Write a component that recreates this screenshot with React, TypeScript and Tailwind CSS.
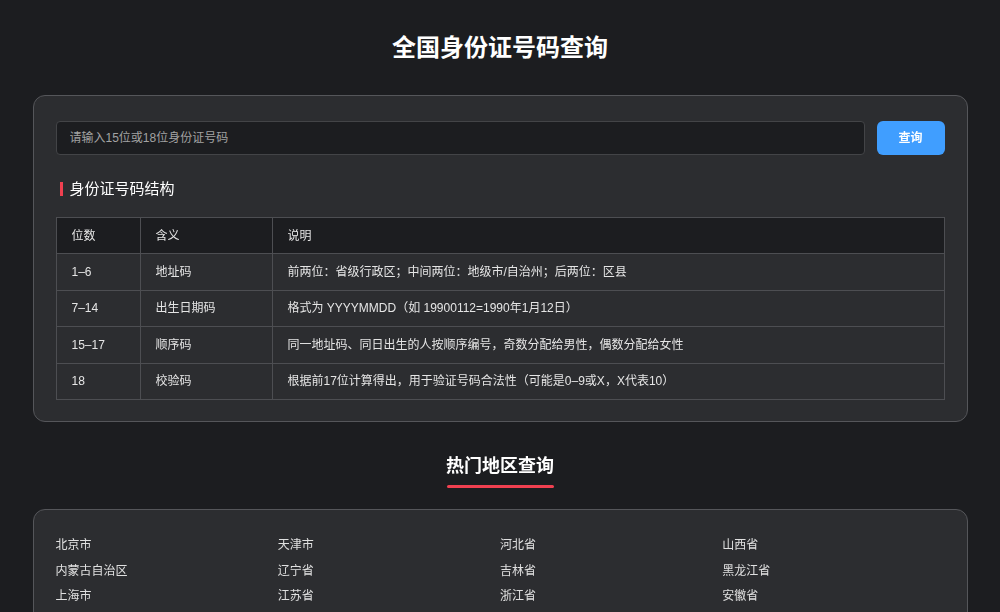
import React, { useState } from "react";

const rows = [
  { digits: "1–6", name: "地址码", desc: "前两位：省级行政区；中间两位：地级市/自治州；后两位：区县" },
  { digits: "7–14", name: "出生日期码", desc: "格式为 YYYYMMDD（如 19900112=1990年1月12日）" },
  { digits: "15–17", name: "顺序码", desc: "同一地址码、同日出生的人按顺序编号，奇数分配给男性，偶数分配给女性" },
  { digits: "18", name: "校验码", desc: "根据前17位计算得出，用于验证号码合法性（可能是0–9或X，X代表10）" },
];

const regions = [
  "北京市", "天津市", "河北省", "山西省",
  "内蒙古自治区", "辽宁省", "吉林省", "黑龙江省",
  "上海市", "江苏省", "浙江省", "安徽省",
];

export default function App() {
  const [idNo, setIdNo] = useState("");

  return (
    <div
      className="min-h-screen bg-[#1c1d20] text-[#e5e5e5] overflow-hidden"
      style={{ fontFamily: '"Liberation Sans", "Noto Sans CJK SC", sans-serif' }}
    >
      <div className="w-[935px] mx-auto pt-[30px]">
        <h1 className="text-center text-[24px] leading-[36px] font-bold text-white">全国身份证号码查询</h1>

        <div className="mt-[29px] rounded-xl border border-[#55565a] bg-[#2c2d30] px-[22px] pt-[25px] pb-[21px]">
          <div className="flex gap-3">
            <input
              autoFocus
              value={idNo}
              onChange={(e) => setIdNo(e.target.value)}
              placeholder="请输入15位或18位身份证号码"
              className="flex-1 h-[34px] rounded border border-[#434447] bg-[#1c1d20] px-[13px] text-[12px] text-white placeholder:text-[#a3a3a3] outline-none caret-white"
            />
            <button className="w-[68px] h-[34px] rounded-md bg-[#409eff] text-[12px] font-bold text-white">查询</button>
          </div>

          <div className="mt-[23px] flex items-center gap-[7px] pl-[4px]">
            <span className="w-[3px] h-[14px] bg-[#f04050]" />
            <h2 className="text-[15px] leading-[22px] font-normal text-white">身份证号码结构</h2>
          </div>

          <table className="mt-[17px] w-full border-collapse text-[12px] text-[#e5e5e5]">
            <thead>
              <tr className="bg-[#1c1d20]">
                <th className="w-[84px] h-[36px] border border-[#4d4e52] px-[15px] text-left font-normal">位数</th>
                <th className="w-[132px] h-[36px] border border-[#4d4e52] px-[15px] text-left font-normal">含义</th>
                <th className="h-[36px] border border-[#4d4e52] px-[15px] text-left font-normal">说明</th>
              </tr>
            </thead>
            <tbody>
              {rows.map((r) => (
                <tr key={r.digits}>
                  <td className="h-[36.5px] border border-[#4d4e52] px-[15px]">{r.digits}</td>
                  <td className="h-[36.5px] border border-[#4d4e52] px-[15px]">{r.name}</td>
                  <td className="h-[36.5px] border border-[#4d4e52] px-[15px]">{r.desc}</td>
                </tr>
              ))}
            </tbody>
          </table>
        </div>

        <div className="mt-[30px] flex flex-col items-center">
          <h2 className="text-[18px] leading-[28px] font-bold text-white">热门地区查询</h2>
          <span className="mt-[5px] w-[107px] h-[3px] rounded-full bg-[#f04050]" />
        </div>

        <div className="mt-[21px] rounded-xl border border-[#55565a] bg-[#2c2d30] px-[22px] pt-[23px] pb-[22px]">
          <div className="grid grid-cols-4">
            {regions.map((name) => (
              <a key={name} className="h-[25.5px] leading-[25.5px] text-[12px] text-[#e0e0e0] cursor-pointer">
                {name}
              </a>
            ))}
          </div>
        </div>
      </div>
    </div>
  );
}
